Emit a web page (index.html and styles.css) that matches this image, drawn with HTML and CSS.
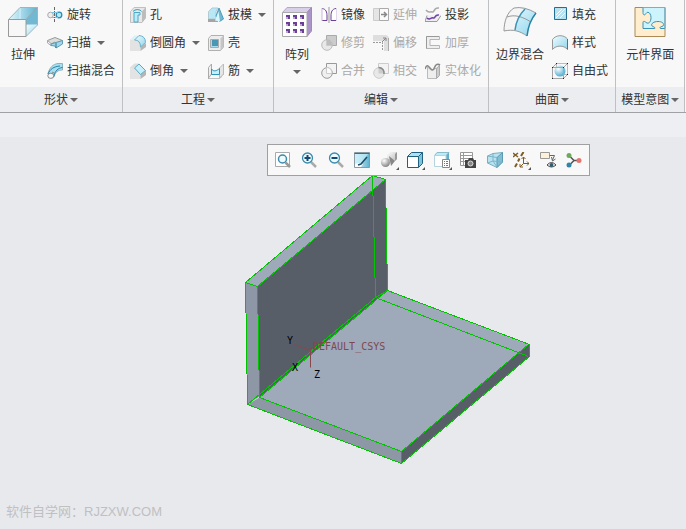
FILE: index.html
```html
<!DOCTYPE html>
<html lang="zh-CN">

<head>
    <meta charset="UTF-8">
    <title>零件建模</title>
    <link rel="stylesheet" href="styles.css">
</head>

<body>
    <!-- Shared gradients -->
    <svg class="defs" aria-hidden="true">
        <defs>
            <linearGradient id="ice" x1="0" y1="0" x2="1" y2="1">
                <stop offset="0" stop-color="#f2fcff" />
                <stop offset="1" stop-color="#8fd6ee" />
            </linearGradient>
            <linearGradient id="iceSide" x1="0" y1="0" x2="1" y2="0">
                <stop offset="0" stop-color="#e2f8ff" />
                <stop offset="1" stop-color="#5fb2cf" />
            </linearGradient>
            <linearGradient id="grey" x1="0" y1="0" x2="1" y2="1">
                <stop offset="0" stop-color="#fff" />
                <stop offset="1" stop-color="#bbb" />
            </linearGradient>
            <radialGradient id="ball" cx="0.35" cy="0.3" r="0.8">
                <stop offset="0" stop-color="#fff" />
                <stop offset="1" stop-color="#3aa3cc" />
            </radialGradient>
            <radialGradient id="greyBall" cx="0.35" cy="0.3" r="0.8">
                <stop offset="0" stop-color="#fff" />
                <stop offset="1" stop-color="#777" />
            </radialGradient>
        </defs>
    </svg>

    <header class="ribbon">
        <!-- Shapes -->
        <section class="group">
            <div class="group-body">
                <button class="big">
                    <svg width="30" height="30" viewBox="0 0 30 30">
                        <path d="M.5 12.5 12 .5h17.5L18 12.5z" fill="url(#iceSide)" />
                        <path d="M18 12.5 29.5.5V18H18z" fill="#73b8d2" />
                        <path d="M18 18h11.5L18 29.5z" fill="url(#ice)" />
                        <path d="M12 .5V12M18 18h11.5" stroke="#d9f3fb" fill="none" />
                        <path d="M.5 12.5 12 .5h17.5V18L18 29.5" stroke="#9fb4bd" fill="none" />
                        <path d="M.5 12.5H18v17H.5z" fill="#f7f7f7" stroke="#999" />
                        <path d="m18 12.5 11.5-12" stroke="#8aa6b2" />
                    </svg>
                    <span>拉伸</span>
                </button>
                <div class="column">
                    <button class="small">
                        <svg width="16" height="16" viewBox="0 0 16 16">
                            <circle cx="3.5" cy="8" r="2.8" fill="#eee" stroke="#aaa" />
                            <circle cx="12" cy="8" r="2.8" fill="#b9e9f8" stroke="#2c8cb4" stroke-width="1.3" />
                            <path d="M4 5.5h7M4 10.5h7" stroke="#7fc3dc" />
                            <path d="M7.5 0v16" stroke="#666" stroke-dasharray="3 1 1 1" />
                        </svg>
                        <span>旋转</span>
                    </button>
                    <button class="small">
                        <svg width="16" height="16" viewBox="0 0 16 16">
                            <path d="M.5 5.5 8 2.5l7.5 3L9 8 8 7 4 9z" fill="#ddd" stroke="#999" />
                            <path d="M.5 5.5V8L4 10.5v-2z" fill="#f5f5f5" stroke="#aaa" />
                            <path d="m4 9 5-1.500 6.500-2V9L9 13l-1-2-4-.5z" fill="#9fd8ea" stroke="#5e9db3" />
                            <path d="M9 8v5" stroke="#2b7c9c" />
                        </svg>
                        <span>扫描</span>
                        <i class="caret"></i>
                    </button>
                    <button class="small">
                        <svg width="16" height="16" viewBox="0 0 16 16">
                            <path d="M1 11C2 5 6 1 11 .5h4.500V7C11 7 8 9 7 14z" fill="#a6dff1" stroke="#8bb3c1" />
                            <path d="M1 11C3 6 7 3.500 13 3" fill="none" stroke="#287fa3" />
                            <path d="M7 13c1-5 4-8 8.500-8.500" fill="none" stroke="#287fa3" />
                            <ellipse cx="3.800" cy="12.800" rx="3" ry="2.600" fill="#f7f7f7" stroke="#888" />
                            <path d="m5 9 3 1.500" stroke="#888" />
                        </svg>
                        <span>扫描混合</span>
                    </button>
                </div>
            </div>
            <button class="group-title"><span>形状</span><i class="caret"></i></button>
        </section>

        <!-- Engineering -->
        <section class="group">
            <div class="group-body">
                <div class="column">
                    <button class="small">
                        <svg width="16" height="16" viewBox="0 0 16 16">
                            <path d="M.5 4.500 4 .5h11.500V11L12 15.500H.5z" fill="#e8e8e8" stroke="#c0c0c0" />
                            <path d="M12 4.500 15.500.5V11L12 15.500z" fill="#bcbcbc" />
                            <path d="M4 15V5.500h6V8H8v7z" fill="#b9ecfa" stroke="#4fa6c5" />
                            <path d="M3 4.500C5 2 10 2 11.500 4.500" fill="none" stroke="#2f93b8" />
                        </svg>
                        <span>孔</span>
                    </button>
                    <button class="small">
                        <svg width="16" height="16" viewBox="0 0 16 16">
                            <path d="M0 4.500 4.500.5H9L4.500 5H0z" fill="#d9f1f8" />
                            <path d="M0 5h4.500q6 0 6 7v4H0z" fill="#e3e3e3" />
                            <path d="M10.500 12 16 8v4l-5.500 4z" fill="#b5b5b5" />
                            <path d="M4.500 5 9 .5q6.500.5 6.500 7L10.500 12q0-7-6-7z" fill="url(#ice)" stroke="#6fb0c7" />
                        </svg>
                        <span>倒圆角</span>
                        <i class="caret"></i>
                    </button>
                    <button class="small">
                        <svg width="16" height="16" viewBox="0 0 16 16">
                            <path d="M0 4.500 4.500.5H9L4.500 5H0z" fill="#dedede" />
                            <path d="M0 5h4.500l6 6.500V16H0z" fill="#e3e3e3" />
                            <path d="M10.500 11.500 16 7.500V12l-5.500 4z" fill="#b5b5b5" />
                            <path d="M4.500 5 9 1l6.500 6.500-5 4z" fill="#c4effb" stroke="#5aa7c1" />
                        </svg>
                        <span>倒角</span>
                        <i class="caret"></i>
                    </button>
                </div>
                <div class="column">
                    <button class="small">
                        <svg width="16" height="16" viewBox="0 0 16 16">
                            <path d="M.5 4.500 4 1h6L8 4.500V12H.5z" fill="#b7e8f7" stroke="#b5cbd3" />
                            <path d="M0 12h10v3H0z" fill="#a5a5a5" />
                            <path d="m8 9 3-8 4.500 11-4 2.500z" fill="#6fb9d3" stroke="#4c9dbb" />
                            <path d="m7 13.500 3.500-9 1.500 10z" fill="#d8f5fd" />
                        </svg>
                        <span>拔模</span>
                        <i class="caret"></i>
                    </button>
                    <button class="small">
                        <svg width="16" height="16" viewBox="0 0 16 16">
                            <path d="M.5 3.500 3 .5h12.500V12l-3 3.500H.5z" fill="#ededed" stroke="#b0b0b0" />
                            <path d="M12.500 3.500 15.500.5V12l-3 3.500z" fill="#c5c5c5" />
                            <path d="M2.500 4.500h8v8h-8z" fill="#a6dcef" stroke="#aaa" />
                            <path d="M4 5h6v6H4z" fill="#4a96b5" />
                        </svg>
                        <span>壳</span>
                    </button>
                    <button class="small">
                        <svg width="16" height="16" viewBox="0 0 16 16">
                            <path d="M.5 15.500v-11L3.500 1v10l-3 4" fill="#eee" stroke="#aaa" />
                            <path d="M.5 15.500H12L15.500 11V1" fill="none" stroke="#888" stroke-dasharray="1 1" />
                            <path d="m11.500 5 4-4v10l-4 4z" fill="#e5e5e5" stroke="#bbb" />
                            <path d="M3.500 6c2 3 5 2 8-.5v6h-8z" fill="#c5f0fb" stroke="#2f93b8" />
                        </svg>
                        <span>筋</span>
                        <i class="caret"></i>
                    </button>
                </div>
            </div>
            <button class="group-title"><span>工程</span><i class="caret"></i></button>
        </section>

        <!-- Editing -->
        <section class="group">
            <div class="group-body">
                <button class="big">
                    <svg width="30" height="30" viewBox="0 0 30 30">
                        <path d="M.5 5.500 5 .5h24.500L25 5.500z" fill="#d9cfe8" stroke="#b6a5cf" />
                        <path d="M25 5.500 29.500.5V24L25 29.500z" fill="#ab94c9" stroke="#9f8abc" />
                        <path d="M.5 5.500H25v24H.5z" fill="#fff" stroke="#a9a9a9" />
                        <path d="M4 8h4v4H4zm7 0h4v4h-4zm7 0h4v4h-4zM4 15h4v4H4zm7 0h4v4h-4zm7 0h4v4h-4zM4 22h4v4H4zm7 0h4v4h-4zm7 0h4v4h-4z" fill="#6a3f96" />
                        <path d="M4 10h2v2H4zm7 0h2v2h-2zm7 0h2v2h-2zM4 17h2v2H4zm7 0h2v2h-2zm7 0h2v2h-2zM4 24h2v2H4zm7 0h2v2h-2zm7 0h2v2h-2z" fill="#bda8d5" />
                    </svg>
                    <span>阵列</span>
                    <i class="caret"></i>
                </button>
                <div class="column">
                    <button class="small">
                        <svg width="16" height="16" viewBox="0 0 16 16">
                            <path d="M1 1.500C5 2 6 5 6 9v4.500H1" fill="#fff" stroke="#6a3f96" />
                            <path d="M1 1v13M15 1v13" stroke="#c9b9dc" />
                            <path d="M15 1.500C11 2 10 5 10 9v4.500h5" fill="#fff" stroke="#6a3f96" />
                            <path d="M8 0v16" stroke="#999" />
                        </svg>
                        <span>镜像</span>
                    </button>
                    <button class="small" disabled>
                        <svg width="16" height="16" viewBox="0 0 16 16">
                            <path d="M5.500.5h10v10h-10z" fill="#ccc" stroke="#aaa" />
                            <circle cx="6" cy="10" r="5.300" fill="#e4e4e4" fill-opacity=".8" stroke="#bbb" />
                            <path d="M5.500 4.500v6H11c0-3.500-2-6-5.500-6z" fill="#bdbdbd" />
                        </svg>
                        <span>修剪</span>
                    </button>
                    <button class="small" disabled>
                        <svg width="16" height="16" viewBox="0 0 16 16">
                            <path d="M5.500.5h10v10h-10z" fill="#f3f3f3" stroke="#999" />
                            <circle cx="6" cy="10" r="5.300" fill="#f0f0f0" stroke="#999" />
                            <path d="M5.500 4.500v6H11c0-3.500-2-6-5.500-6z" fill="#fafafa" stroke="#ccc" />
                        </svg>
                        <span>合并</span>
                    </button>
                </div>
                <div class="column">
                    <button class="small" disabled>
                        <svg width="16" height="16" viewBox="0 0 16 16">
                            <path d="M.5 1.500h6v12h-6z" fill="#e5e5e5" stroke="#ccc" />
                            <path d="M6.500 1.500h9v12h-9z" fill="#fafafa" stroke="#aaa" />
                            <path d="M8 7.500h5M11 5l2.500 2.500L11 10" fill="none" stroke="#888" stroke-width="1.500" />
                        </svg>
                        <span>延伸</span>
                    </button>
                    <button class="small" disabled>
                        <svg width="16" height="16" viewBox="0 0 16 16">
                            <path d="M0 0h12q4 0 4 4v12h-5V6H0z" fill="#dedede" />
                            <path d="M15.500 3v13" stroke="#aaa" />
                            <path d="M0 7.500h9.500V16" fill="none" stroke="#999" stroke-dasharray="2 1" />
                            <path d="m9 7 4-4m-3 0h3v3" fill="none" stroke="#888" />
                        </svg>
                        <span>偏移</span>
                    </button>
                    <button class="small" disabled>
                        <svg width="16" height="16" viewBox="0 0 16 16">
                            <path d="M5.500.5h10v10h-10z" fill="#f3f3f3" stroke="#ccc" />
                            <circle cx="6" cy="10" r="5.300" fill="#e8e8e8" stroke="#ccc" />
                            <path d="M5.500 4.500v6H11c0-3.500-2-6-5.500-6z" fill="#ccc" />
                            <path d="M5.500 4.500c4 0 6 3 5.500 6.500" fill="none" stroke="#888" stroke-width="1.500" />
                        </svg>
                        <span>相交</span>
                    </button>
                </div>
                <div class="column">
                    <button class="small">
                        <svg width="16" height="16" viewBox="0 0 16 16">
                            <path d="M1 3c3 4 4 1 6 2 3 1 1-5 7-4" fill="none" stroke="#aaa" stroke-width="1.500" />
                            <path d="m2 8.500-2 6h12l4-6" fill="#eee" stroke="#999" />
                            <path d="M2 11c3 3 4-1 6 0 3 1 1-4 6-3" fill="none" stroke="#7140b0" stroke-width="1.500" />
                        </svg>
                        <span>投影</span>
                    </button>
                    <button class="small" disabled>
                        <svg width="16" height="16" viewBox="0 0 16 16">
                            <path d="M14.500 4.500v-3h-13v12h13v-3H5v-6z" fill="#eee" stroke="#b5b5b5" />
                            <path d="M14 1.500H1.500v12" fill="none" stroke="#999" />
                        </svg>
                        <span>加厚</span>
                    </button>
                    <button class="small" disabled>
                        <svg width="16" height="16" viewBox="0 0 16 16">
                            <path d="M2.500 4v11.500h9V5l-5 2.500z" fill="#eee" stroke="#bbb" />
                            <path d="m11.500 15.500 3-3V2l-3 4z" fill="#ccc" stroke="#aaa" />
                            <path d="M0 6c2-6 4-2 6 0 3 3 3-2 5-4 1-1 3-1 4 0" fill="none" stroke="#888" stroke-width="1.500" />
                        </svg>
                        <span>实体化</span>
                    </button>
                </div>
            </div>
            <button class="group-title"><span>编辑</span><i class="caret"></i></button>
        </section>

        <!-- Surfaces -->
        <section class="group">
            <div class="group-body">
                <button class="big">
                    <svg width="34" height="30" viewBox="0 0 34 30">
                        <path d="M1 24C1 15 4 5 11 1q10-2 22 5c-5 6-8 14-9 23-7-5-14-7-23-5z" fill="url(#ice)" />
                        <path d="M1 24C1 15 4 5 11 1q5-1 11 1c-6 6-9 13-10 21-4 0-8 0-11 1z" fill="#f5f5f5" />
                        <path d="M1 24C1 15 4 5 11 1q10-2 22 5M4 10c8-3 16 0 24 5M1 24c9-2 16 0 23 5" fill="none" stroke="#999" />
                        <path d="M22 2c-6 6-9 13-10 21" fill="none" stroke="#3a93b6" stroke-width="1.500" />
                        <path d="M33 6c-5 6-8 14-9 23" fill="none" stroke="#2583aa" stroke-width="1.500" />
                    </svg>
                    <span>边界混合</span>
                </button>
                <div class="column">
                    <button class="small">
                        <svg width="16" height="16" viewBox="0 0 16 16">
                            <path d="M2.500.5h12v12h-12z" fill="#b4e2f1" stroke="#246f91" />
                            <path d="m4 8 6-6m-6 9 9-9m-5 9 5-5" stroke="#fff" />
                        </svg>
                        <span>填充</span>
                    </button>
                    <button class="small">
                        <svg width="16" height="16" viewBox="0 0 16 16">
                            <path d="M.5 14.500v-10C4-.5 12-.5 15.500 4v10.500C12 10 4 10 .5 14.500z" fill="url(#ice)" />
                            <path d="M.5 14.500v-10C4-.5 12-.5 15.500 4M.5 14.500C4 10 12 10 15.500 14.500" fill="none" stroke="#999" />
                            <path d="M15.500 4v10.500" stroke="#2583aa" />
                        </svg>
                        <span>样式</span>
                    </button>
                    <button class="small">
                        <svg width="16" height="16" viewBox="0 0 16 16">
                            <path d="M4.500.5h11v11h-11z" fill="none" stroke="#bbb" />
                            <circle cx="8" cy="8" r="5.500" fill="url(#ball)" />
                            <path d="M.5 4.500h11v11H.5zm0 0 4-4m7 4 4-4m-4 15 4-4" fill="none" stroke="#a5a5a5" />
                            <path d="M0 4h1v1H0zm11 0h1v1h-1zM0 15h1v1H0zm11 0h1v1h-1zM4 0h1v1H4zm11 0h1v1h-1zm0 11h1v1h-1z" fill="#222" />
                        </svg>
                        <span>自由式</span>
                    </button>
                </div>
            </div>
            <button class="group-title"><span>曲面</span><i class="caret"></i></button>
        </section>

        <!-- Model intent -->
        <section class="group">
            <div class="group-body group-body-center">
                <button class="big">
                    <svg width="32" height="30" viewBox="0 0 32 30">
                        <path d="M1 .5h30v29H1z" fill="#ffedcd" />
                        <path d="M9 .5h22v21h-4c-2 0-1-2 1-2 3-1 2-5-4-5s-8 4-5 5c2 1 3 2 1 2H9v-6c0-2 2-1 3 0 3 2 5-1 5-5s-3-7-5-4c-1 2-3 2-3-1z" fill="#cdf3fd" stroke="#3792b6" />
                        <path d="M9 .5H1v29h30v-8" fill="none" stroke="#a98b56" />
                        <path d="M9 .5h22v21" fill="none" stroke="#8daab1" />
                    </svg>
                    <span>元件界面</span>
                </button>
            </div>
            <button class="group-title"><span>模型意图</span><i class="caret"></i></button>
        </section>
    </header>

    <div class="strip"></div>

    <main class="canvas">
        <!-- L-shaped part with its coordinate system -->
        <svg class="model" width="286" height="290" viewBox="245 175 286 290">
            <g transform="translate(-.5 -.5)">
                <path d="M246 283 373 176l13 4-128 107z" fill="#9ea9b9" />
                <path d="m246 283 12 4 2 110-12 8z" fill="#8d97a6" />
                <path d="m258 287 128-107 2 111-128 107z" fill="#585e68" />
                <path d="m260 398 128-107 141 54-127 107z" fill="#9ea9b9" />
                <path d="m248 405 12-7 142 54v12z" fill="#8d97a6" />
                <path d="m402 452 127-107h1v12L402 464z" fill="#585e68" />
                <g class="edges">
                    <path d="M246 283 373 176l13 4-128 107z" />
                    <path d="m246 283 2 122 154 59 128-107v-12L388 291l-2-111" />
                    <path d="m258 287 2 111 142 54v12m0-12 127-107" />
                    <path d="m373 176 3 122 153 59M248 405l128-107 12-7M260 398l128-107" />
                </g>
                <path d="m295 345 16 6v17m-3-17 8-5" class="axes" />
            </g>
            <text x="313" y="350" class="csys">DEFAULT_CSYS</text>
            <text x="287" y="344" class="axis">Y</text>
            <text x="292" y="371" class="axis">X</text>
            <text x="314" y="378" class="axis">Z</text>
        </svg>

        <!-- Floating view toolbar -->
        <div class="view-bar" role="toolbar">
            <button class="tool" aria-label="重新调整">
                <svg width="16" height="16" viewBox="0 0 16 16">
                    <path d="M.5.5h14v14H.5z" fill="#fff" stroke="#aaa" />
                    <path d="m10.500 10.500 4.500 4.500" stroke="#999" stroke-width="2.500" />
                    <circle cx="7.500" cy="7" r="4" fill="#eefaff" stroke="#3b8bac" stroke-width="1.500" />
                </svg>
            </button>
            <button class="tool" aria-label="放大">
                <svg width="16" height="16" viewBox="0 0 16 16">
                    <path d="m10 10 5 5" stroke="#aaa" stroke-width="2.500" />
                    <circle cx="6.500" cy="6" r="5" fill="#eefaff" stroke="#3b8bac" stroke-width="1.300" />
                    <path d="M3.500 6h6m-3-3v6" stroke="#104b72" stroke-width="2" />
                </svg>
            </button>
            <button class="tool" aria-label="缩小">
                <svg width="16" height="16" viewBox="0 0 16 16">
                    <path d="m10 10 5 5" stroke="#aaa" stroke-width="2.500" />
                    <circle cx="6.500" cy="6" r="5" fill="#eefaff" stroke="#3b8bac" stroke-width="1.300" />
                    <path d="M3.500 6h6" stroke="#104b72" stroke-width="2" />
                </svg>
            </button>
            <button class="tool" aria-label="重画">
                <svg width="16" height="16" viewBox="0 0 16 16">
                    <path d="M.5.5h15v15H.5z" fill="url(#iceSide)" stroke="#8a9ba3" />
                    <path d="M1 1h14L6 12H1z" fill="#c6eefa" fill-opacity=".7" />
                    <path d="M1 15v-3l4-1 4 1-2 3z" fill="#fff" />
                    <path d="m13 5-6 7-3 1" fill="none" stroke="#1e4e66" stroke-width="1.500" />
                    <path d="M.5 1.500h15" stroke="#2a7696" />
                </svg>
            </button>
            <button class="tool" aria-label="渲染选项">
                <svg width="16" height="16" viewBox="0 0 16 16">
                    <path d="m6 2 2-2h8v7l-2 2H6z" fill="url(#grey)" />
                    <path d="m14 2 2-2v7l-2 2z" fill="#999" />
                    <path d="m8 4 6 5-4 5z" fill="#888" />
                    <circle cx="4.500" cy="10.500" r="4.500" fill="url(#greyBall)" />
                </svg>
                <i class="corner"></i>
            </button>
            <button class="tool" aria-label="显示样式">
                <svg width="16" height="16" viewBox="0 0 16 16">
                    <path d="m.5 4.500 4-4h11l-4 4z" fill="#aee2f3" />
                    <path d="m11.500 4.500 4-4v11l-4 4z" fill="#7fc4de" />
                    <path d="M.5 4.500h11v11H.5zm0 0 4-4h11v11l-4 4m0-11 4-4" fill="none" stroke="#1f617f" />
                    <path d="M1 5h10v10H1z" fill="#fff" />
                </svg>
                <i class="corner"></i>
            </button>
            <button class="tool" aria-label="已保存方向">
                <svg width="16" height="16" viewBox="0 0 16 16">
                    <path d="m.5 3.500 2.500-3h12l-3 3z" fill="#bdeaf7" stroke="#8bbccd" />
                    <path d="m12 3.500 3-3V8h-3z" fill="#62adca" />
                    <path d="M.5 3.500H12v11H.5z" fill="#fff" stroke="#b5d4de" />
                    <path d="M8.500 7.500h7v8h-7z" fill="#fff" stroke="#888" />
                    <path d="M10 9.500h1m1 0h2m-4 2h1m1 0h2m-4 2h1m1 0h2" stroke="#777" />
                </svg>
                <i class="corner"></i>
            </button>
            <button class="tool" aria-label="视图管理器">
                <svg width="16" height="16" viewBox="0 0 16 16">
                    <path d="M.5.5h12v13H.5zm0 3h12m-12 3h12m-12 3h12M3.500.5v13" fill="#fff" stroke="#999" />
                    <path d="M5 8h3l1-2h4l1 2h2v8H5z" fill="#444" />
                    <circle cx="10.500" cy="11.500" r="2.500" fill="#888" stroke="#ddd" />
                </svg>
            </button>
            <button class="tool" aria-label="透视图">
                <svg width="16" height="16" viewBox="0 0 16 16">
                    <path d="M.5 4 6 1.500l9.500-1V10L10 15.500.5 11z" fill="#b8e4f1" stroke="#7badbf" />
                    <path d="m10 5.500 5.500-5V10L10 15.500z" fill="#82bfd5" stroke="#5a9ab3" />
                    <path d="m.5 4 9.500 1.500M6 1.500V9L.5 11M6 9l9.500 1M6 9l4 6" fill="none" stroke="#7db4c8" />
                </svg>
            </button>
            <button class="tool" aria-label="基准显示过滤器">
                <svg width="16" height="16" viewBox="0 0 16 16">
                    <path d="m0 1 5 4m0-4L0 5" stroke="#7d5d20" stroke-width="1.500" />
                    <path d="M10.500 0 8 4M6.500 6.500 5 9.500m-1 2L2 15" stroke="#7d5d20" stroke-width="2" />
                    <path d="M10.500 5v6.500H16m-2-2 2 2-2 2M8.500 7l2-2 2 2m-2 4.500L7 15m0-3v3h3" fill="none" stroke="#7d5d20" />
                </svg>
                <i class="corner"></i>
            </button>
            <button class="tool" aria-label="注释显示">
                <svg width="16" height="16" viewBox="0 0 16 16">
                    <path d="M.5.5h9v6h-9z" fill="#fff1d8" stroke="#999" />
                    <path d="M9.500 3.500h5l-2 4.500m-1-3 1 4 3-2" fill="none" stroke="#666" />
                    <path d="M7 13q4.500-5 9 0-4.500 4-9 0z" fill="#fff" stroke="#444" />
                    <circle cx="11.500" cy="13" r="2" fill="#315d70" />
                </svg>
            </button>
            <button class="tool" aria-label="旋转中心">
                <svg width="16" height="16" viewBox="0 0 16 16">
                    <path d="M3.500 4 8 8.500 3.500 13M8 8.500h4" fill="none" stroke="#555" stroke-width="1.500" />
                    <circle cx="3" cy="3.500" r="2.500" fill="#6daa5d" />
                    <circle cx="3" cy="13" r="2.500" fill="#3484aa" />
                    <circle cx="13" cy="8.500" r="2.500" fill="#e37770" />
                </svg>
            </button>
        </div>

        <p class="watermark">软件自学网：RJZXW.COM</p>
    </main>
</body>

</html>
```
FILE: styles.css
```css
body {
    margin: 0;
    min-height: 100vh;
    display: flex;
    flex-direction: column;
    font-family: "Liberation Sans", "Noto Sans CJK SC", sans-serif;
    font-size: 12px;
    line-height: 16px;
    color: #333;
    background-color: #e8e9ed;
}

button {
    margin: 0;
    padding: 0;
    border: 0;
    background: none;
    font: inherit;
    color: inherit;
    white-space: nowrap;
    cursor: pointer;
}

svg {
    display: block;
    flex: none;
}

.defs {
    position: absolute;
    width: 0;
    height: 0;
}

/* Ribbon */
.ribbon {
    display: flex;
    background-color: #f8f8f8;
    border-bottom: 1px solid #a0a1a4;
    overflow: hidden;
}

.group {
    flex: none;
    display: flex;
    flex-direction: column;
    border-right: 1px solid #bfc0c2;
}

.group-body {
    display: flex;
    gap: 8px;
    padding: 1px 7px 2px;
}

.group-body-center {
    justify-content: center;
}

.column {
    display: flex;
    flex-direction: column;
}

.small {
    height: 28px;
    display: flex;
    align-items: center;
    gap: 4px;
}

.small .caret {
    margin-left: 2px;
}

.small:disabled {
    color: #a9a9a9;
    cursor: default;
}

.big {
    min-width: 32px;
    height: 84px;
    padding-top: 6px;
    display: flex;
    flex-direction: column;
    align-items: center;
    gap: 10px;
}

.big .caret {
    margin-top: -3px;
}

.caret {
    width: 0;
    height: 0;
    border: 4px solid transparent;
    border-top-color: #666;
    border-bottom: 0;
}

.group-title {
    height: 25px;
    padding: 0 5px;
    display: flex;
    align-items: center;
    justify-content: center;
    gap: 2px;
    background-color: #ecedf0;
}

.strip {
    height: 24px;
    background-color: #eeeff2;
}

/* Graphics area */
.canvas {
    flex: 1;
    position: relative;
    min-height: 340px;
    display: flex;
    align-items: flex-end;
}

.model {
    position: absolute;
    left: 245px;
    top: 38px;
}

.edges {
    fill: none;
    stroke: #00c400;
    stroke-width: 1px;
    shape-rendering: crispEdges;
}

.axes {
    fill: none;
    stroke: #85484f;
}

.csys,
.axis {
    font-family: "DejaVu Sans Mono", monospace;
    font-size: 10px;
    fill: #7e4850;
}

.axis {
    fill: #000;
}

.view-bar {
    position: absolute;
    left: 267px;
    top: 7px;
    box-sizing: border-box;
    width: 323px;
    height: 32px;
    padding: 0 2px;
    display: flex;
    align-items: center;
    justify-content: space-between;
    background-color: #f8f8f8;
    border: 1px solid #a0a0a0;
}

.tool {
    position: relative;
    width: 26px;
    height: 28px;
    display: flex;
    align-items: center;
    justify-content: center;
}

.corner {
    position: absolute;
    right: 3px;
    bottom: 4px;
    border-left: 3px solid transparent;
    border-bottom: 3px solid #555;
}

.watermark {
    margin: 0;
    padding: 0 6px 9px;
    font-size: 13px;
    color: #bfc0c2;
}
```
